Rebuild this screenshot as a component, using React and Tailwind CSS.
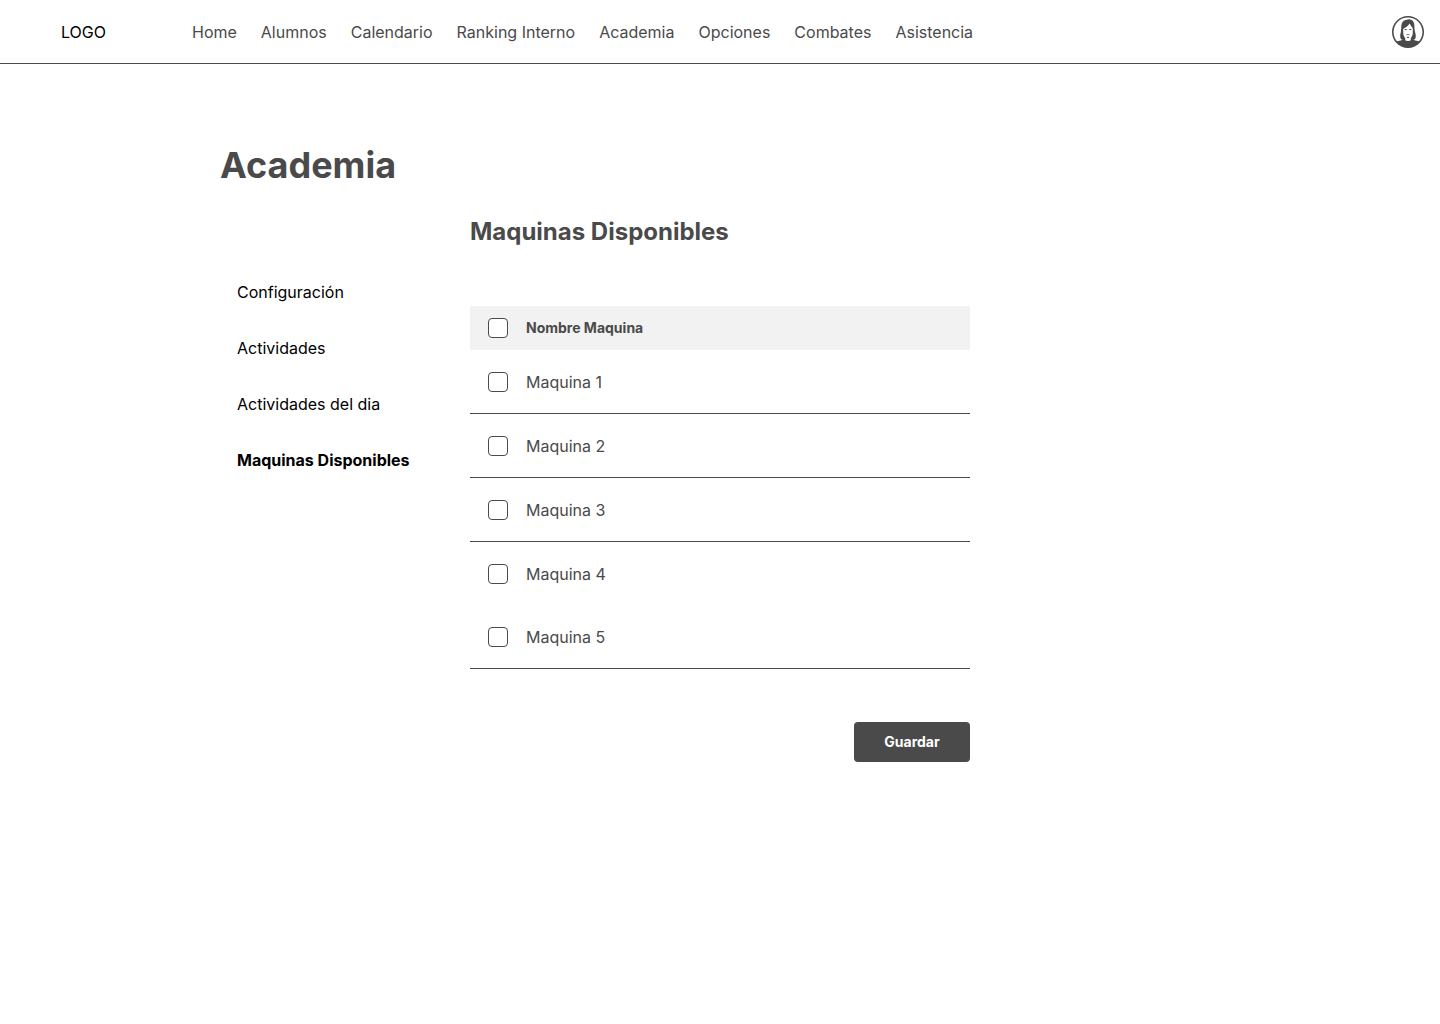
import { useState } from 'react';

const navItems = ['Home', 'Alumnos', 'Calendario', 'Ranking Interno', 'Academia', 'Opciones', 'Combates', 'Asistencia'];

const sections = ['Configuración', 'Actividades', 'Actividades del dia', 'Maquinas Disponibles'];

const machines = [
  { id: 1, name: 'Maquina 1', divider: true },
  { id: 2, name: 'Maquina 2', divider: true },
  { id: 3, name: 'Maquina 3', divider: true },
  { id: 4, name: 'Maquina 4', divider: false },
  { id: 5, name: 'Maquina 5', divider: true },
];

function Avatar() {
  return (
    <svg viewBox="0 0 32 32" className="size-8" aria-hidden="true">
      <defs>
        <clipPath id="avatar-disc">
          <circle cx="16" cy="16" r="15.2" />
        </clipPath>
      </defs>
      <circle cx="16" cy="16" r="15.2" fill="#fff" />
      <g clipPath="url(#avatar-disc)" fill="#4a4a4a">
        <path d="M2 32V27C4 25.6 6.6 24.8 9.6 24.2L12.6 22.6H19.4L22.4 24.2C25.4 24.8 28 25.6 30 27V32Z" />
        <path d="M14.8 3.8C16.4 2.8 20.4 3.2 21.8 6.4C22.8 9 22.2 12.4 22.8 15C23.3 17.2 24.2 19.4 23.6 22C23 23.4 21.4 24.2 20 23.8H12C10.4 24.2 9 23.4 8.4 22C7.8 19.4 8.7 17.2 9 15C9.4 12.4 9 9.6 9.8 7.4C10.8 5 12.6 3.8 14.8 3.8Z" />
        <path fill="#fff" d="M11.2 13C12.8 12 15.8 10.4 17.6 7.6C18.4 9.4 20 10.8 20.8 12.6V16.4C20.8 18.8 20 20.8 18.8 21.9V24C18 25.4 14 25.4 13.2 24V21.9C12 20.8 11.2 18.8 11.2 16.4Z" />
        <path d="M12.7 13.1H14.7V14H12.7ZM17.3 13.1H19.3V14H17.3Z" />
        <path d="M13.7 19.4C14.3 18.4 15.3 18 16 18.2C16.7 18 17.7 18.4 18.3 19.4L17.6 19.1H14.4Z" />
        <path d="M15.3 20.7H16.7L17 22.1H15Z" />
      </g>
      <circle cx="16" cy="16" r="15.2" fill="none" stroke="#4a4a4a" strokeWidth="1.6" />
    </svg>
  );
}

function Checkbox(props) {
  return (
    <input
      type="checkbox"
      className="block size-5 appearance-none rounded border border-[#4a4a4a] bg-white checked:bg-[#4a4a4a]"
      {...props}
    />
  );
}

export default function App() {
  const [selected, setSelected] = useState([]);
  const allSelected = selected.length === machines.length;

  const toggle = (id) =>
    setSelected((ids) => (ids.includes(id) ? ids.filter((i) => i !== id) : [...ids, id]));

  return (
    <div className="min-h-screen bg-white font-['Inter',sans-serif] text-base text-[#4a4a4a]">
      <header className="flex h-16 items-center border-b border-[#4a4a4a] pr-4">
        <a href="#inicio" className="w-48 shrink-0 pl-[61px] text-black">LOGO</a>
        <nav aria-label="Principal" className="flex grow gap-6">
          {navItems.map((item) => (
            <a key={item} href="#seccion" className="whitespace-nowrap">{item}</a>
          ))}
        </nav>
        <button type="button" aria-label="Perfil" className="rounded-full">
          <Avatar />
        </button>
      </header>

      <main className="mx-auto max-w-[1000px] pt-20">
        <h1 className="text-4xl/[42px] font-bold">Academia</h1>
        <div className="flex pt-[30px]">
          <nav aria-label="Academia" className="flex w-[250px] shrink-0 flex-col gap-8 pl-[17px] pt-16 text-black">
            {sections.map((item) => (
              <a
                key={item}
                href="#academia"
                aria-current={item === 'Maquinas Disponibles' ? 'page' : undefined}
                className="whitespace-nowrap aria-[current=page]:font-bold"
              >
                {item}
              </a>
            ))}
          </nav>

          <section className="w-full max-w-[500px]">
            <h2 className="text-2xl font-bold">Maquinas Disponibles</h2>
            <table className="mt-[58px] w-full border-separate border-spacing-0 text-left">
              <thead>
                <tr className="h-11 bg-[#f2f2f2]">
                  <th className="w-14 pl-[18px]">
                    <Checkbox
                      aria-label="Seleccionar todas"
                      checked={allSelected}
                      onChange={() => setSelected(allSelected ? [] : machines.map((m) => m.id))}
                    />
                  </th>
                  <th className="text-sm font-bold">Nombre Maquina</th>
                </tr>
              </thead>
              <tbody>
                {machines.map(({ id, name, divider }) => {
                  const cell = divider ? 'h-16 border-b border-[#4a4a4a]' : 'h-[63px]';
                  return (
                    <tr key={id}>
                      <td className={`${cell} pl-[18px]`}>
                        <Checkbox id={`maquina-${id}`} checked={selected.includes(id)} onChange={() => toggle(id)} />
                      </td>
                      <td className={cell}>
                        <label htmlFor={`maquina-${id}`}>{name}</label>
                      </td>
                    </tr>
                  );
                })}
              </tbody>
            </table>
            <div className="mt-[53px] flex justify-end">
              <button type="button" className="h-10 w-[116px] rounded bg-[#4a4a4a] text-sm font-bold text-white">
                Guardar
              </button>
            </div>
          </section>
        </div>
      </main>
    </div>
  );
}
